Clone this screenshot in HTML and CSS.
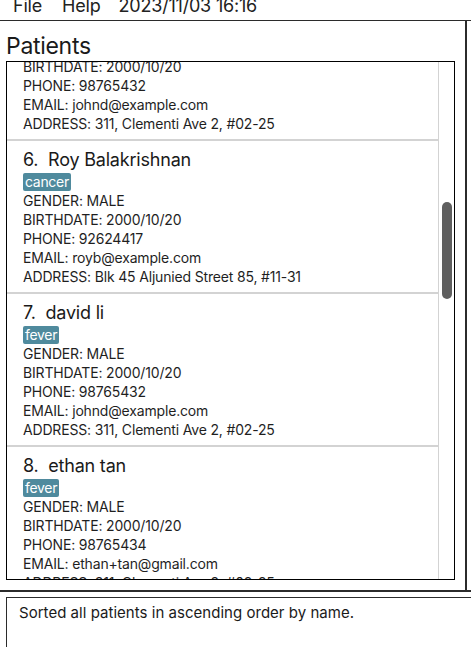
FILE: index.html
```html
<!DOCTYPE html>
<html>
<head>
<meta charset="utf-8">
<link rel="stylesheet" href="styles.css">
</head>
<body>
<div class="menubar">
  <div class="menu-items">
    <span class="menu-file">File</span>
    <span class="menu-help">Help</span>
    <span class="menu-date">2023/11/03 16:16</span>
  </div>
</div>
<div class="top-section">
  <div class="panel">
    <div class="panel-title">Patients</div>
    <div class="list-box">
      <div class="list-viewport">
        <ul class="cells">
          <li class="cell">
            <div class="cell-title">5.&nbsp; john doe</div>
            <div class="tags"><span class="tag">fever</span></div>
            <div class="field">GENDER: MALE</div>
            <div class="field">BIRTHDATE: 2000/10/20</div>
            <div class="field">PHONE: 98765432</div>
            <div class="field">EMAIL: johnd@example.com</div>
            <div class="field">ADDRESS: 311, Clementi Ave 2, #02-25</div>
          </li>
          <li class="cell">
            <div class="cell-title">6.&nbsp; Roy Balakrishnan</div>
            <div class="tags"><span class="tag">cancer</span></div>
            <div class="field">GENDER: MALE</div>
            <div class="field">BIRTHDATE: 2000/10/20</div>
            <div class="field">PHONE: 92624417</div>
            <div class="field">EMAIL: royb@example.com</div>
            <div class="field">ADDRESS: Blk 45 Aljunied Street 85, #11-31</div>
          </li>
          <li class="cell">
            <div class="cell-title">7.&nbsp; david li</div>
            <div class="tags"><span class="tag">fever</span></div>
            <div class="field">GENDER: MALE</div>
            <div class="field">BIRTHDATE: 2000/10/20</div>
            <div class="field">PHONE: 98765432</div>
            <div class="field">EMAIL: johnd@example.com</div>
            <div class="field">ADDRESS: 311, Clementi Ave 2, #02-25</div>
          </li>
          <li class="cell">
            <div class="cell-title">8.&nbsp; ethan tan</div>
            <div class="tags"><span class="tag">fever</span></div>
            <div class="field">GENDER: MALE</div>
            <div class="field">BIRTHDATE: 2000/10/20</div>
            <div class="field">PHONE: 98765434</div>
            <div class="field">EMAIL: ethan+tan@gmail.com</div>
            <div class="field">ADDRESS: 311, Clementi Ave 2, #02-25</div>
          </li>
        </ul>
      </div>
      <div class="scrollbar">
        <div class="thumb"></div>
      </div>
    </div>
  </div>
</div>
<div class="result-box">
  <div class="result-text">Sorted all patients in ascending order by name.</div>
</div>
</body>
</html>
```
FILE: styles.css
```css
* { box-sizing: border-box; }
html, body {
  margin: 0;
  padding: 0;
  background: #ffffff;
  font-family: Inter, "Noto Sans", sans-serif;
  color: #1f1f1f;
  width: 471px;
  height: 647px;
  overflow: hidden;
}
.menubar {
  height: 21px;
  border-bottom: 1px solid #2b2b2b;
  overflow: hidden;
}
.menu-items {
  display: flex;
  margin-top: -4px;
  font-size: 18px;
  line-height: 20px;
  color: #222;
  letter-spacing: -0.2px;
}
.menu-file { margin-left: 13px; }
.menu-help { margin-left: 20px; }
.menu-date { margin-left: 18px; }
.top-section {
  border-bottom: 2px solid #2b2b2b;
}
.panel {
  width: 467px;
  height: 569px;
  border-right: 2px solid #2b2b2b;
  padding: 10px 0 0 6px;
  display: flex;
  flex-direction: column;
}
.panel-title {
  font-size: 23px;
  line-height: 30px;
  color: #1a1a1a;
  letter-spacing: -0.3px;
}
.list-box {
  width: 449px;
  height: 519px;
  border: 1px solid #000;
  display: flex;
  overflow: hidden;
}
.list-viewport {
  width: 431px;
  height: 100%;
  overflow: hidden;
}
.cells {
  list-style: none;
  margin: -74px 0 0 0;
  padding: 0;
}
.cell {
  height: 153px;
  padding: 7px 0 0 16px;
  border-bottom: 2px solid #d3d3d3;
}
.cell-title {
  font-size: 18px;
  line-height: 23px;
  color: #1a1a1a;
  white-space: pre;
  letter-spacing: -0.2px;
}
.tags {
  display: flex;
  margin-top: 2px;
  height: 18px;
}
.tag {
  background: #4f8a9d;
  color: #ffffff;
  font-size: 14px;
  line-height: 18px;
  padding: 0 2px;
  border-radius: 2px;
  letter-spacing: -0.3px;
}
.field {
  font-size: 14px;
  line-height: 19px;
  margin-top: 0;
  color: #1f1f1f;
  white-space: nowrap;
  letter-spacing: -0.17px;
}
.tags + .field { margin-top: 0; }
.scrollbar {
  width: 16px;
  height: 100%;
  border-left: 1px solid #d3d3d3;
  padding: 140px 0 0 3px;
}
.thumb {
  width: 10px;
  height: 97px;
  background: #5f5f5f;
  border-radius: 5px;
}
.result-box {
  margin: 5px 0 0 6px;
  border-top: 1px solid #2b2b2b;
  border-left: 1px solid #2b2b2b;
  height: 60px;
  padding: 5px 0 0 12px;
}
.result-text {
  font-size: 15px;
  line-height: 20px;
  color: #1a1a1a;
  letter-spacing: 0.03px;
}
```
